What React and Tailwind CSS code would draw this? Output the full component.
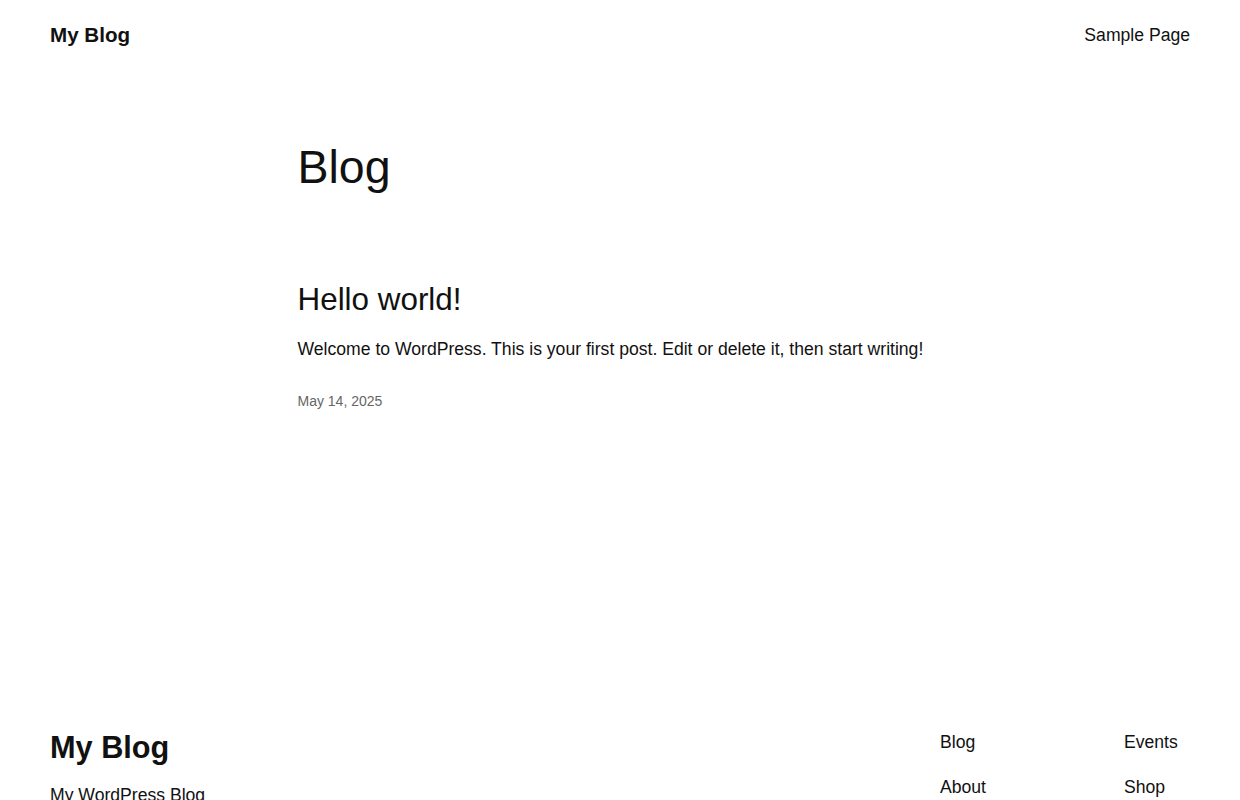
export default function App() {
  return (
    <div className="min-h-[800px] bg-white text-[#111111]" style={{ fontFamily: '"Liberation Sans", Arial, sans-serif' }}>
      <header className="flex items-center justify-between px-[50px] h-[70px]">
        <a className="text-[20.6px] font-bold">My Blog</a>
        <nav className="text-[17.6px]">Sample Page</nav>
      </header>
      <main className="mx-auto w-[645px] pt-[70px]">
        <h1 className="text-[46.5px] leading-[1.2]">Blog</h1>
        <article className="mt-[85px]">
          <h2 className="text-[31.4px] leading-[1.2]">Hello world!</h2>
          <p className="mt-[17px] text-[17.6px] leading-[1.6]">Welcome to WordPress. This is your first post. Edit or delete it, then start writing!</p>
          <div className="mt-[27px] text-[14px] text-[#666666]">May 14, 2025</div>
        </article>
      </main>
      <footer className="flex justify-between px-[50px] pt-[313px]">
        <div>
          <div className="text-[30.7px] font-bold">My Blog</div>
          <div className="mt-[11px] text-[17.6px]">My WordPress Blog</div>
        </div>
        <div className="flex text-[17.6px] pt-[4px]">
          <div className="flex w-[184px] flex-col gap-[19px]"><span>Blog</span><span>About</span></div>
          <div className="flex w-[66px] flex-col gap-[19px]"><span>Events</span><span>Shop</span></div>
        </div>
      </footer>
    </div>
  );
}
